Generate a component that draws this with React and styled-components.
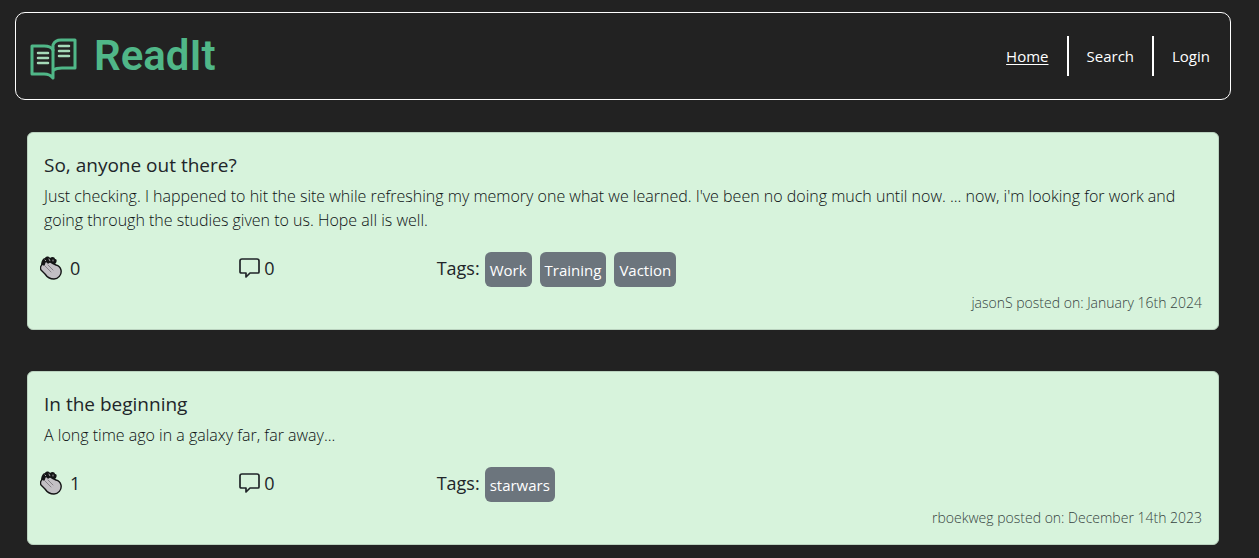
import React from "react";
import styled, { createGlobalStyle } from "styled-components";

const GlobalStyle = createGlobalStyle`
  * { box-sizing: border-box; }
  body {
    margin: 0;
    background: #222222;
    color: #212529;
    font-family: "Segoe UI", "Open Sans", "Noto Sans", sans-serif;
    font-size: 15px;
    line-height: 24px;
  }
  h1, h2, p { margin: 0; }
`;

const Page = styled.div`
  padding: 12px 28px 12px 15px;
`;

const Header = styled.header`
  display: flex;
  align-items: center;
  justify-content: space-between;
  min-height: 88px;
  padding: 0 20px 0 12px;
  border: 1px solid #ffffff;
  border-radius: 10px;
`;

const Brand = styled.a`
  display: flex;
  align-items: center;
  gap: 16px;
  color: #50b788;
  text-decoration: none;
`;

const BrandName = styled.h1`
  font-family: Roboto, sans-serif;
  font-size: 42px;
  font-weight: 600;
  line-height: 48px;
`;

const Nav = styled.nav`
  display: flex;
`;

const NavLink = styled.a`
  padding: 8px 18px;
  color: #ffffff;
  text-decoration: ${(p) => (p.$active ? "underline" : "none")};
  text-underline-offset: 2px;

  & + & {
    border-left: 2px solid #ffffff;
  }

  &:last-child {
    padding-right: 0;
  }
`;

const Feed = styled.main`
  display: flex;
  flex-direction: column;
  gap: 41px;
  padding: 32px 12px 0;
`;

const Card = styled.article`
  padding: 20px 0 14px;
  background: #d7f3dc;
  border: 1px solid #bad2bf;
  border-radius: 6px;
`;

const Title = styled.h2`
  padding: 0 16px;
  margin-bottom: 7px;
  font-size: 19px;
  font-weight: 400;
`;

const Body = styled.p`
  padding: 0 16px;
  color: #0c1013;
  font-size: 16px;
  font-weight: 300;
`;

const Details = styled.div`
  display: grid;
  grid-template-columns: 1fr 1fr 4fr;
  margin-top: 20px;
  font-size: 18px;
`;

const Cell = styled.div`
  display: flex;
  align-items: center;
  gap: ${(p) => p.$gap || 4}px;
  height: 35px;
  padding: 0 12px 3px;
`;

const IconButton = styled.button`
  display: flex;
  padding: 0;
  border: 0;
  background: none;
  color: inherit;
  cursor: pointer;
`;

const TagList = styled.div`
  display: flex;
  gap: 8px;
  height: 35px;
  padding: 0 12px;
`;

const TagLabel = styled.span`
  margin-right: -3px;
  line-height: 32px;
`;

const Tag = styled.span`
  padding: 0 5px;
  border-radius: 6px;
  background: #6c757d;
  color: #ffffff;
  font-size: 15px;
  line-height: 36px;
`;

const Posted = styled.p`
  margin-top: 4px;
  padding: 0 16px;
  color: #36443f;
  font-size: 14px;
  font-weight: 300;
  text-align: right;
`;

const BookLogo = () => (
  <svg width="50" height="50" viewBox="0 -6 50 50" fill="none" aria-hidden="true">
    <g stroke="#50b788" strokeWidth="3" strokeLinejoin="round" strokeLinecap="round">
      <path d="M4 9H16Q23 9 25 13V41Q22 37 16 37H4Z" />
      <path d="M25 13V8Q27 3 33 3H47V31H34Q28 31 26 33" />
    </g>
    <path
      d="M10 16H20M10 21H20M10 26H20M31 9H41M31 14H41M31 19H41"
      stroke="#a5d9b8"
      strokeWidth="2.5"
      strokeLinecap="round"
    />
  </svg>
);

const ClapIcon = () => (
  <svg width="22" height="24" viewBox="0 0 22 24" aria-hidden="true">
    <path
      d="M1 10C1 5 3 2 5 2C6 0 9 0 10 2C12 0 15 1 15 3C17 3 17 5 16 7L12 10Z"
      fill="#141516"
    />
    <path
      d="M5 4L6 5M9 3L10 5M13 4L13 5"
      stroke="#aaa6aa"
      strokeWidth="1"
      strokeLinecap="round"
    />
    <path
      d="M1 10C2 8 3 8 4 9L5 6Q7 5 8 7Q10 5 12 7L16 9Q20 10 21 14C22 19 18 23 14 23C10 23 7 21 5 18L1 14Q0 12 1 10Z"
      fill="#c2bfc4"
      stroke="#141516"
      strokeWidth="1.4"
      strokeLinejoin="round"
    />
    <path d="M5 10L11 16M8 9L13 14" stroke="#858187" strokeWidth="1" strokeLinecap="round" />
  </svg>
);

const CommentIcon = () => (
  <svg width="22" height="22" viewBox="0 0 22 22" fill="none" aria-hidden="true">
    <path
      d="M4 2H19Q21 2 21 4V15Q21 16 20 16H12L8 20V16H4Q2 16 2 15V4Q2 2 4 2Z"
      stroke="#212529"
      strokeWidth="1.7"
      strokeLinejoin="round"
    />
  </svg>
);

const posts = [
  {
    title: "So, anyone out there?",
    body: "Just checking. I happened to hit the site while refreshing my memory one what we learned. I've been no doing much until now. ... now, i'm looking for work and going through the studies given to us. Hope all is well.",
    claps: 0,
    comments: 0,
    tags: ["Work", "Training", "Vaction"],
    posted: "jasonS posted on: January 16th 2024",
  },
  {
    title: "In the beginning",
    body: "A long time ago in a galaxy far, far away...",
    claps: 1,
    comments: 0,
    tags: ["starwars"],
    posted: "rboekweg posted on: December 14th 2023",
  },
];

const Post = ({ post }) => (
  <Card>
    <Title>{post.title}</Title>
    <Body>{post.body}</Body>
    <Details>
      <Cell $gap={8}>
        <IconButton type="button" aria-label="Clap">
          <ClapIcon />
        </IconButton>
        <span>{post.claps}</span>
      </Cell>
      <Cell>
        <IconButton type="button" aria-label="Comments">
          <CommentIcon />
        </IconButton>
        <span>{post.comments}</span>
      </Cell>
      <TagList>
        <TagLabel>Tags:</TagLabel>
        {post.tags.map((tag) => (
          <Tag key={tag}>{tag}</Tag>
        ))}
      </TagList>
    </Details>
    <Posted>{post.posted}</Posted>
  </Card>
);

export default function App() {
  return (
    <>
      <GlobalStyle />
      <Page>
        <Header>
          <Brand href="#home">
            <BookLogo />
            <BrandName>ReadIt</BrandName>
          </Brand>
          <Nav>
            <NavLink href="#home" $active>Home</NavLink>
            <NavLink href="#search">Search</NavLink>
            <NavLink href="#login">Login</NavLink>
          </Nav>
        </Header>
        <Feed>
          {posts.map((post) => (
            <Post key={post.title} post={post} />
          ))}
        </Feed>
      </Page>
    </>
  );
}
